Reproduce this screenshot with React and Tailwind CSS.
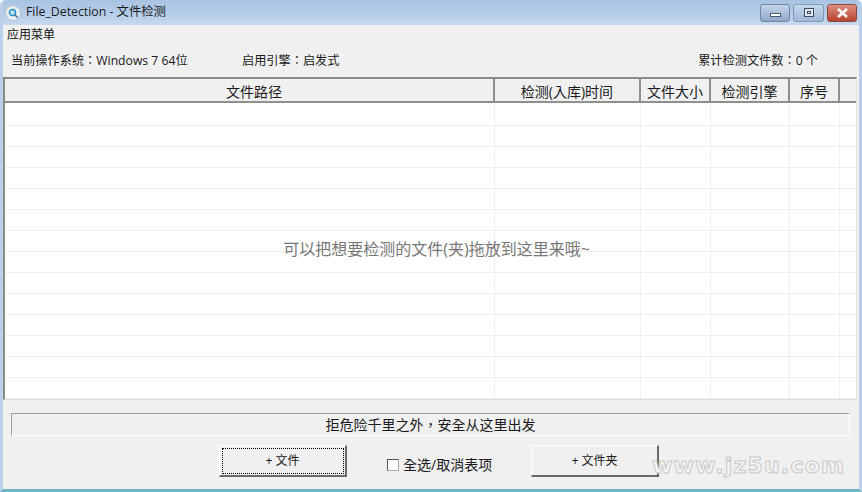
const FONT = { fontFamily: '"Open Sans", "Noto Sans CJK TC", sans-serif' };
const COLUMNS = [
  { label: '文件路径', width: 'w-[490px]', extra: 'pl-[10px]' },
  { label: '检测(入库)时间', width: 'w-[146px]', extra: '' },
  { label: '文件大小', width: 'w-[70px]', extra: '' },
  { label: '检测引擎', width: 'w-[79px]', extra: '' },
  { label: '序号', width: 'w-[50px]', extra: '' },
  { label: '', width: 'flex-1', extra: '' },
];
const ROWS = Array.from({ length: 14 });

function HeaderCell({ label, width, extra }) {
  return (
    <div className={`${width} ${extra} h-full pt-[2px] flex items-center justify-center border-r-2 border-[#8f8f8f] bg-[#f0f0f0] text-[14px] text-[#1a1a1a] last:border-r-0`}>
      {label}
    </div>
  );
}

function WinButton({ className, children }) {
  return (
    <div className={`h-[18px] rounded-[3px] border flex items-center justify-center ${className}`}>
      {children}
    </div>
  );
}

export default function App() {
  return (
    <div style={FONT} className="relative w-[862px] h-[492px] flex flex-col overflow-hidden bg-[#f0f0f0] border-x-[3px] border-x-[#b9d0e8] border-b-[3px] border-b-[#6fb6c8] rounded-t-[5px]">
      {/* Title bar */}
      <div className="-mx-[3px] h-[25px] shrink-0 flex items-center justify-between pl-[5px] pr-[5px] bg-gradient-to-b from-[#a9c3e2] via-[#b4cce8] to-[#c6d9ee]">
        <div className="flex items-center gap-[5px]">
          <svg width="16" height="16" viewBox="0 0 16 16">
            <circle cx="8" cy="8" r="7.5" fill="#e8eef2" stroke="#b4c2ca" />
            <circle cx="7.5" cy="7.5" r="3" fill="#bfe6f7" stroke="#2a8fc4" strokeWidth="1.5" />
            <path d="M10 10l2.5 2.5" stroke="#2a6f9c" strokeWidth="1.6" />
          </svg>
          <span className="text-[12.3px] text-[#1c1c1c]">File_Detection - 文件检测</span>
        </div>
        <div className="flex items-center gap-[3px]">
          <WinButton className="w-[30px] border-[#6f86a8] bg-gradient-to-b from-[#c5d5e8] to-[#8fa8c8]">
            <span className="mt-[5px] w-[11px] h-[4px] bg-white border border-[#4a5a70]" />
          </WinButton>
          <WinButton className="w-[31px] border-[#7f96b6] bg-gradient-to-b from-[#c5d8ec] to-[#a0b9d6]">
            <span className="w-[10px] h-[9px] border border-[#3e4c60] bg-[#dfe8f2] flex items-center justify-center">
              <span className="w-[4px] h-[3px] border border-[#3e4c60]" />
            </span>
          </WinButton>
          <WinButton className="w-[30px] bg-gradient-to-b from-[#dd8f80] to-[#b8402e] border-[#8a4a44]">
            <svg width="13" height="10" viewBox="0 0 13 10">
              <path d="M2 1l9 8M11 1l-9 8" stroke="#ffffff" strokeWidth="2.6" />
            </svg>
          </WinButton>
        </div>
      </div>

      {/* Menu */}
      <div className="h-[19px] shrink-0 flex items-center pl-[4px] text-[12px] text-[#111]">应用菜单</div>

      {/* Info row */}
      <div className="h-[33px] shrink-0 flex items-center pt-[1px] pl-[8px] pr-[41px] text-[12.2px] text-[#1a1a1a]">
        <span className="w-[231px]">当前操作系统：Windows 7 64位</span>
        <span>启用引擎：启发式</span>
        <span className="ml-auto">累计检测文件数：0 个</span>
      </div>

      {/* Table */}
      <div className="relative h-[323px] shrink-0 mr-[2px] flex flex-col bg-white border-l-2 border-t-2 border-[#8a8a8a] border-r border-r-[#e4e4e4] border-b border-b-[#dcdcdc] overflow-hidden">
        <div className="h-[24px] shrink-0 flex border-b-2 border-b-[#8f8f8f]">
          {COLUMNS.map((col, i) => (
            <HeaderCell key={i} label={col.label} width={col.width} extra={col.extra} />
          ))}
        </div>
        <div className="flex-1 flex flex-col">
          {ROWS.map((_, i) => (
            <div key={i} className={`${i === 0 ? 'h-[23px]' : 'h-[21px]'} shrink-0 flex border-b border-[#efefef]`}>
              {COLUMNS.map((col, j) => (
                <div key={j} className={`${col.width} h-full border-r border-r-[#efefef] last:border-r-0`} />
              ))}
            </div>
          ))}
        </div>
        <div className="absolute inset-x-0 top-[158px] pl-[12px] text-center text-[16px] text-[#777]">
          可以把想要检测的文件(夹)拖放到这里来哦~
        </div>
      </div>

      {/* Status */}
      <div className="h-[23px] shrink-0 mt-[13px] ml-[8px] mr-[9px] flex items-center justify-center bg-[#f0f0f0] border border-t-[#a0a0a0] border-l-[#a0a0a0] border-r-white border-b-white text-[14px] text-[#1a1a1a]">
        拒危险千里之外，安全从这里出发
      </div>

      {/* Actions */}
      <div className="mt-[9px] ml-[216px] flex items-start">
        <button className="w-[128px] h-[32px] flex items-center justify-center bg-[#f0f0f0] border border-white border-r-2 border-b-2 border-r-[#6a6a6a] border-b-[#6a6a6a] text-[12px] text-[#1a1a1a] outline-1 outline-dotted -outline-offset-4 outline-black">
          + 文件
        </button>
        <label className="ml-[40px] mt-[9px] flex items-center gap-[4px] text-[14px] text-[#1a1a1a]">
          <span className="w-[12px] h-[12px] bg-white border border-t-[#555] border-l-[#555] border-r-[#aaa] border-b-[#aaa]" />
          全选/取消表项
        </label>
        <button className="ml-[39px] w-[128px] h-[32px] flex items-center justify-center bg-[#f0f0f0] border border-white border-r-2 border-b-2 border-r-[#6a6a6a] border-b-[#6a6a6a] text-[12px] text-[#1a1a1a]">
          + 文件夹
        </button>
      </div>

      {/* Watermark */}
      <div
        style={{ fontFamily: '"DejaVu Sans", sans-serif', WebkitTextStroke: '1px #c9c9c9' }}
        className="absolute left-[649px] top-[455px] text-[22px] font-bold tracking-[1.2px] text-[#f4f4f4] leading-none"
      >
        www.jz5u.com
      </div>
    </div>
  );
}
